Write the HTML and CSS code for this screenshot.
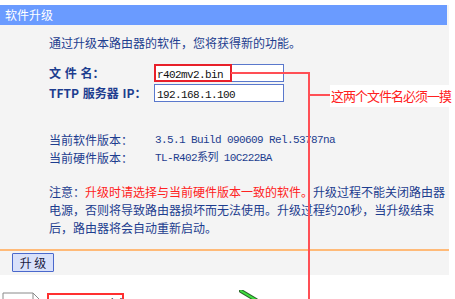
FILE: index.html
```html
<!DOCTYPE html>
<html lang="zh-CN">
<head>
<meta charset="utf-8">
<title>软件升级</title>
<link rel="stylesheet" href="styles.css">
</head>
<body>
<div class="page">
  <div class="panel">
    <div class="title">软件升级</div>
    <div class="content">
      <p class="intro">通过升级本路由器的软件，您将获得新的功能。</p>
      <div class="form">
        <div class="label strong">文 件 名：</div>
        <div class="input"><span class="mono">r402mv2.bin</span><span class="mark"></span></div>
        <div class="label strong">TFTP 服务器 IP：</div>
        <div class="input"><span class="mono">192.168.1.100</span></div>
      </div>
      <div class="info">
        <div class="label">当前软件版本：</div>
        <div class="value">3.5.1 Build 090609 Rel.53787na</div>
        <div class="label">当前硬件版本：</div>
        <div class="value">TL-R402系列 10C222BA</div>
      </div>
      <p class="notice">注意：<span class="warn">升级时请选择与当前硬件版本一致的软件。</span>升级过程不能关闭路由器<br>电源，否则将导致路由器损坏而无法使用。升级过程约20秒，当升级结束<br>后，路由器将会自动重新启动。</p>
    </div>
    <div class="rule"></div>
    <div class="actions"><button class="btn" type="button">升 级</button></div>
  </div>
  <div class="bottom">
    <svg class="file" width="40" height="10" viewBox="0 0 40 10"><path d="M1 10 V1 H31 L38 8 V10" fill="#fff" stroke="#8a8a8a" stroke-width="1"/><path d="M31 1 V8 H38" fill="none" stroke="#8a8a8a" stroke-width="1"/></svg>
    <div class="chip">r402mv2.bin</div>
    <svg class="arrow" width="20" height="10" viewBox="0 0 20 10"><path d="M2 1 L17 10" stroke="#2a6a2a" stroke-width="4" stroke-linecap="round"/><path d="M2 1 L17 10" stroke="#3fe03f" stroke-width="2" stroke-linecap="round"/></svg>
  </div>
  <div class="ann-h1"></div>
  <div class="ann-v"></div>
  <div class="ann-h2"></div>
  <div class="ann-text">这两个文件名必须一摸</div>
</div>
</body>
</html>
```

FILE: styles.css
```css
* { box-sizing: border-box; }
html, body { margin: 0; padding: 0; background: #fff; }
body { font-family: "Noto Sans CJK SC", "Noto Sans", sans-serif; font-size: 12px; }
.page { position: relative; width: 455px; height: 299px; overflow: hidden; padding-top: 5px; }
.panel { width: 449px; background: #f4f4f4; padding-bottom: 3px; }
.title { height: 20px; line-height: 20px; background: #6a9bff; color: #fff; padding-left: 5px; width: 447px; font-size: 12px; }
.content { padding: 10px 0 0 49px; color: #1d3d8f; }
.intro { margin: 0; line-height: 16px; height: 16px; }
.form { margin-top: 13px; display: grid; grid-template-columns: 105px 130px; row-gap: 2px; }
.label { line-height: 18px; white-space: nowrap; }
.strong { font-weight: bold; word-spacing: 1px; }
.input { position: relative; height: 18px; border: 1px solid #5a78cc; background: #fff; padding-left: 2px; line-height: 16px; color: #111; }
.mono { font-family: "Liberation Mono", "DejaVu Sans Mono", monospace; font-size: 11px; letter-spacing: -0.6px; }
.mark { position: absolute; left: -1px; top: -1px; width: 78px; height: 18px; border: 2px solid #e8202a; }
.info { margin-top: 29px; display: grid; grid-template-columns: 106px auto; }
.value { line-height: 18px; font-family: "Liberation Mono", "Noto Sans CJK SC", monospace; font-size: 11px; letter-spacing: -0.6px; white-space: nowrap; }
.notice { margin: 16px 0 0; line-height: 18px; white-space: nowrap; }
.warn { color: #ff2222; }
.rule { margin-top: 12px; height: 2px; background: #ffba78; }
.actions { padding: 2px 0 0 12px; }
.btn { display: block; width: 42px; height: 19px; padding: 0; margin: 0; border: 1px solid #4a68cc; background: #d9e1fa; color: #1a1a40; font-family: "Noto Sans CJK SC", sans-serif; font-size: 12px; line-height: 17px; border-radius: 1px; }
.bottom { display: flex; align-items: flex-start; padding-top: 17px; height: 24px; }
.file { margin-left: 2px; margin-top: 0; }
.chip { margin-left: 5px; margin-top: 1px; width: 77px; height: 14px; border: 2px solid #ff3030; background: #fff; font-family: "Liberation Mono", monospace; font-size: 11px; padding: 2px 0 0 9px; line-height: 12px; color: #222; overflow: hidden; }
.arrow { margin-left: 115px; margin-top: -2px; }
.ann-h1 { position: absolute; left: 231px; top: 72px; width: 79px; height: 2px; background: #ff4f55; }
.ann-v { position: absolute; left: 308px; top: 72px; width: 2px; height: 230px; background: #ff4f55; }
.ann-h2 { position: absolute; left: 310px; top: 94px; width: 20px; height: 2px; background: #ff4f55; }
.ann-text { position: absolute; left: 330px; top: 85px; width: 130px; height: 22px; background: #fff; color: #ff2020; font-size: 13px; letter-spacing: -1px; line-height: 22px; padding-left: 1px; white-space: nowrap; }
```
